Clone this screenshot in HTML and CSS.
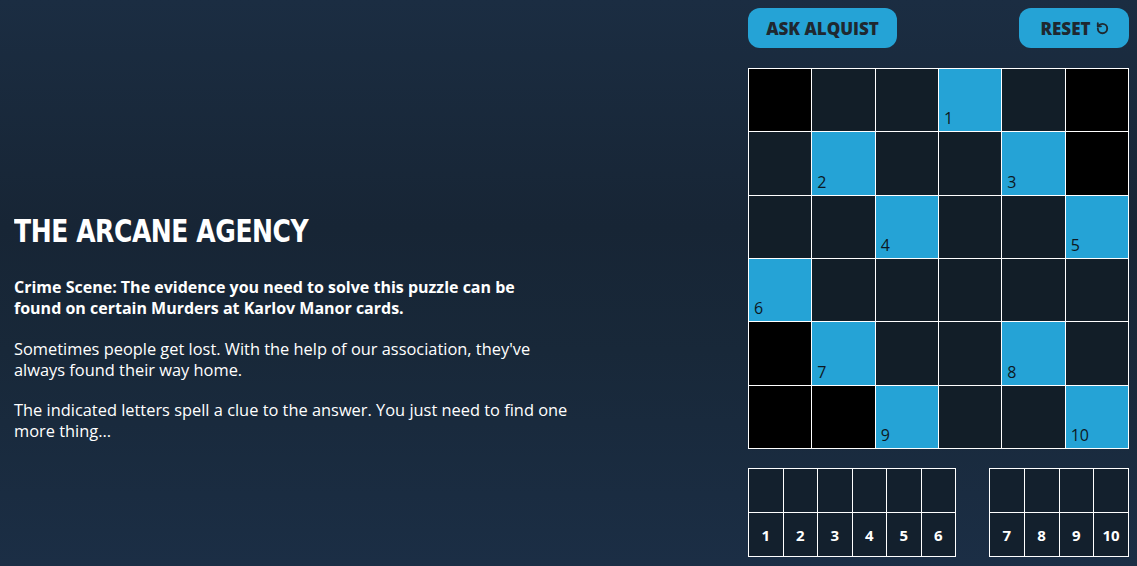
FILE: index.html
```html
<!DOCTYPE html>
<html lang="en">
<head>
<meta charset="utf-8">
<title>The Arcane Agency</title>
<link rel="stylesheet" href="styles.css">
</head>
<body>
<main class="page">
  <section class="intro">
    <h1 class="title">THE ARCANE AGENCY</h1>
    <p class="lead">Crime Scene: The evidence you need to solve this puzzle can be found on certain Murders at Karlov Manor cards.</p>
    <p class="copy">Sometimes people get lost. With the help of our association, they've always found their way home.</p>
    <p class="copy">The indicated letters spell a clue to the answer. You just need to find one more thing...</p>
  </section>
  <section class="puzzle">
    <div class="toolbar">
      <button class="btn btn-ask">ASK ALQUIST</button>
      <button class="btn btn-reset">RESET
        <svg class="reset-icon" viewBox="0 0 24 24" width="15" height="15" aria-hidden="true">
          <path d="M4.5 12a7.5 7.5 0 1 0 7.5-7.5 8 8 0 0 0-5.6 2.3L4.5 8.5" fill="none" stroke="currentColor" stroke-width="3" stroke-linecap="round" stroke-linejoin="round"/>
          <path d="M4.5 3.5v5h5" fill="none" stroke="currentColor" stroke-width="3" stroke-linecap="round" stroke-linejoin="round"/>
        </svg>
      </button>
    </div>
    <div class="grid">
      <div class="cell black"></div><div class="cell dark"></div><div class="cell dark"></div><div class="cell blue"><span>1</span></div><div class="cell dark"></div><div class="cell black"></div>
      <div class="cell dark"></div><div class="cell blue"><span>2</span></div><div class="cell dark"></div><div class="cell dark"></div><div class="cell blue"><span>3</span></div><div class="cell black"></div>
      <div class="cell dark"></div><div class="cell dark"></div><div class="cell blue"><span>4</span></div><div class="cell dark"></div><div class="cell dark"></div><div class="cell blue"><span>5</span></div>
      <div class="cell blue"><span>6</span></div><div class="cell dark"></div><div class="cell dark"></div><div class="cell dark"></div><div class="cell dark"></div><div class="cell dark"></div>
      <div class="cell black"></div><div class="cell blue"><span>7</span></div><div class="cell dark"></div><div class="cell dark"></div><div class="cell blue"><span>8</span></div><div class="cell dark"></div>
      <div class="cell black"></div><div class="cell black"></div><div class="cell blue"><span>9</span></div><div class="cell dark"></div><div class="cell dark"></div><div class="cell blue"><span>10</span></div>
    </div>
    <div class="answers">
      <div class="answer answer-six">
        <div class="slot"></div><div class="slot"></div><div class="slot"></div><div class="slot"></div><div class="slot"></div><div class="slot"></div>
        <div class="num">1</div><div class="num">2</div><div class="num">3</div><div class="num">4</div><div class="num">5</div><div class="num">6</div>
      </div>
      <div class="answer answer-four">
        <div class="slot"></div><div class="slot"></div><div class="slot"></div><div class="slot"></div>
        <div class="num">7</div><div class="num">8</div><div class="num">9</div><div class="num">10</div>
      </div>
    </div>
  </section>
</main>
</body>
</html>
```
FILE: styles.css
```css
* { box-sizing: border-box; }
html, body { margin: 0; height: 100%; }
body {
  background: linear-gradient(to bottom, #1b2d42 0%, #172535 40%, #182839 62%, #1b2e45 100%);
  color: #fff;
  font-family: "Open Sans", "DejaVu Sans", sans-serif;
  overflow: hidden;
}
.page {
  display: flex;
  justify-content: space-between;
  height: 566px;
  padding: 8px 8px 9px 14px;
}
.intro {
  width: 560px;
  display: flex;
  flex-direction: column;
  padding-top: 201px;
}
.title {
  margin: 0 0 24px;
  font-family: "DejaVu Sans", sans-serif;
  font-stretch: condensed;
  font-weight: 700;
  font-size: 32px;
  line-height: 44px;
  letter-spacing: -0.5px;
  white-space: nowrap;
  transform: scaleX(0.87);
  transform-origin: left center;
}
.lead {
  margin: 0 0 19px;
  max-width: 530px;
  font-weight: 700;
  font-size: 16px;
  line-height: 21px;
}
.copy {
  margin: 0 0 19px;
  font-size: 16.4px;
  line-height: 21px;
}
.puzzle {
  width: 381px;
  display: flex;
  flex-direction: column;
}
.toolbar {
  display: flex;
  justify-content: space-between;
  height: 40px;
  margin-bottom: 20px;
}
.btn {
  border: 0;
  background: #25a3d6;
  color: #1f2830;
  font-family: "Open Sans", sans-serif;
  font-weight: 800;
  font-size: 17px;
  border-radius: 12px;
  height: 40px;
  display: flex;
  align-items: center;
  justify-content: center;
  gap: 4px;
  padding: 0;
}
.btn-ask { width: 149px; }
.btn-reset { width: 110px; padding-left: 2px; }
.reset-icon { display: block; }
.grid {
  width: 381px;
  height: 381px;
  display: grid;
  grid-template-columns: repeat(6, 1fr);
  grid-template-rows: repeat(6, 1fr);
  gap: 1px;
  padding: 1px;
  background: #fff;
}
.cell {
  display: flex;
  align-items: flex-end;
  padding: 0 0 3px 5px;
  font-size: 16px;
  line-height: 20px;
  color: #0d1822;
}
.black { background: #000; }
.dark { background: #121e28; }
.blue { background: #25a3d6; }
.answers {
  margin-top: 19px;
  display: flex;
  justify-content: space-between;
}
.answer {
  display: grid;
  grid-template-rows: 43px 43px;
  gap: 1px;
  padding: 1px;
  background: #fff;
}
.answer-six { width: 208px; grid-template-columns: repeat(6, 1fr); }
.answer-four { width: 140px; grid-template-columns: repeat(4, 1fr); }
.slot, .num { background: #13202d; }
.num {
  display: flex;
  align-items: center;
  justify-content: center;
  font-weight: 700;
  font-size: 15px;
  color: #fff;
}
```
